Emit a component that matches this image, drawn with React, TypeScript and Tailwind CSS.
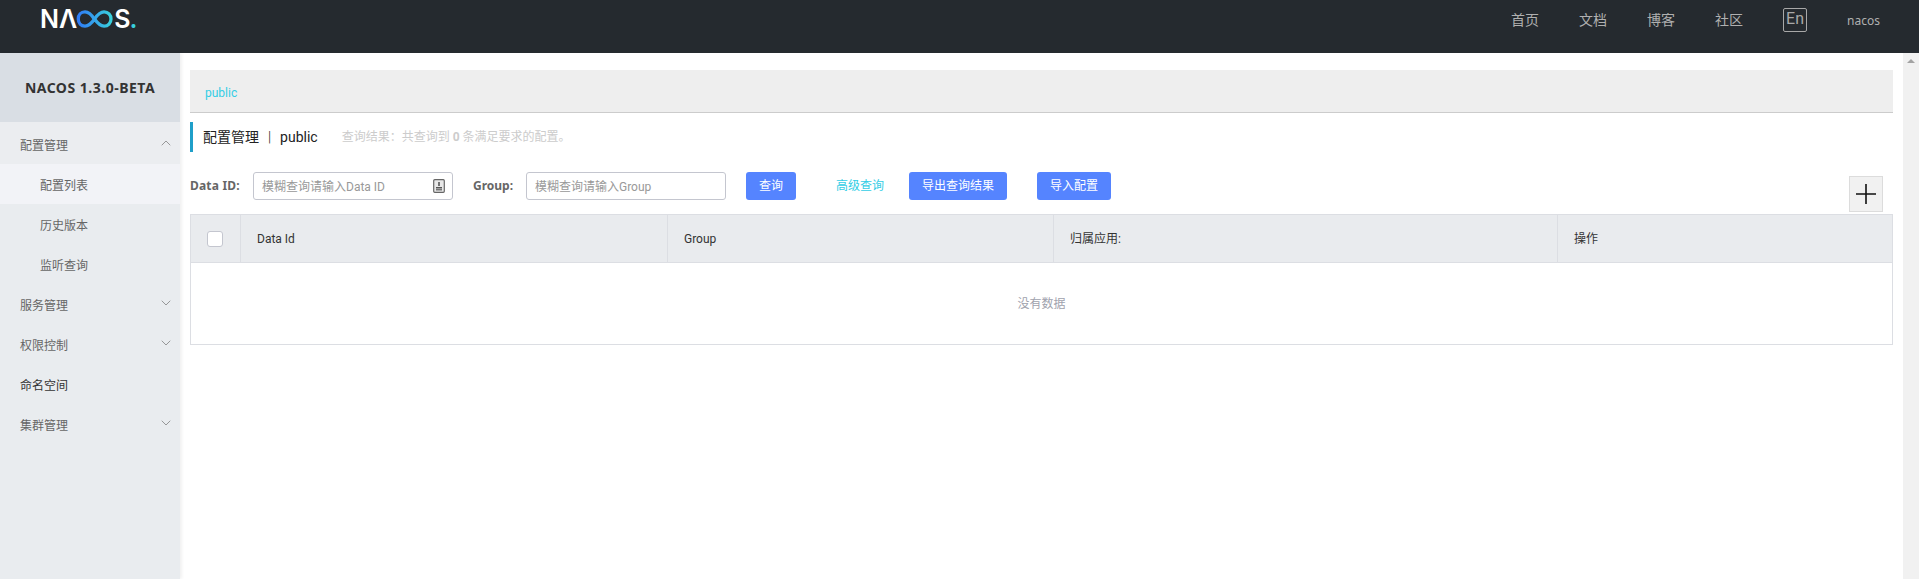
import React from "react";
import { ChevronDown, ChevronUp } from "lucide-react";

const font = "[font-family:'Roboto','Noto_Sans_CJK_SC',sans-serif]";
const boldFont = "[font-family:'Noto_Sans','Noto_Sans_CJK_SC',sans-serif]";

function Logo() {
  return (
    <div className="ml-10 mt-[7px] flex h-6 items-center text-white [font-family:'Inter',sans-serif] text-[25px] font-semibold leading-6">
      <span>NΛ</span>
      <svg width="40" height="20" viewBox="0 0 42 22" fill="none" className="-ml-[2px]">
        <defs>
          <linearGradient id="nacos-g" x1="0" x2="1" y1="0" y2="0">
            <stop offset="0" stopColor="#2f7cf6" />
            <stop offset="0.55" stopColor="#36a9ea" />
            <stop offset="1" stopColor="#38d0dc" />
          </linearGradient>
        </defs>
        <path
          d="M20 11C17 6 14 3.2 10 3.2C5.6 3.2 2.6 6.6 2.6 11C2.6 15.4 5.6 18.8 10 18.8C14 18.8 17 16 20.5 11C24 6 27 3.2 31 3.2C35.4 3.2 38.6 6.6 38.6 11C38.6 15.4 35.4 18.8 31 18.8C27 18.8 24 16 20.5 11"
          stroke="url(#nacos-g)"
          strokeWidth="3.6"
        />
      </svg>
      <span className="-ml-[1px]">S</span>
      <span className="-ml-[1px] text-[#38d0dc]">.</span>
    </div>
  );
}

function Header() {
  const links = ["首页", "文档", "博客", "社区"];
  return (
    <header className="flex h-[53px] items-start justify-between bg-[#252a2f]">
      <Logo />
      <div className="mr-[39px] flex items-center pt-2">
        {links.map((t) => (
          <span key={t} className="w-[68px] text-[14px] leading-5 text-[#b0b0b0]">
            {t}
          </span>
        ))}
        <span className="flex h-[24px] w-[24px] items-start justify-center rounded-[2px] border border-[#a8a8a8] text-[16px] leading-[20px] text-[#a8a8a8]">
          En
        </span>
        <span className={`ml-[40px] pt-[2px] text-[12px] leading-5 text-[#b0b0b0] ${boldFont}`}>nacos</span>
      </div>
    </header>
  );
}

function NavItem({ label, sub, open, arrow, dark }: { label: string; sub?: boolean; open?: boolean; arrow?: boolean; dark?: boolean }) {
  return (
    <div
      className={`flex h-10 items-center justify-between pt-1 text-[12px] ${sub ? "pl-10" : "pl-5"} pr-[6px] ${open ? "bg-[#f2f3f7]" : ""} ${dark ? "text-[#333]" : "text-[#666]"}`}
    >
      <span>{label}</span>
      {arrow === true && <ChevronDown size={16} strokeWidth={1.1} className="mb-[6px] text-[#777]" />}
    </div>
  );
}

function Sidebar() {
  return (
    <aside className="flex w-[180px] shrink-0 flex-col bg-[#e9ecef] shadow-[2px_0_3px_rgba(0,0,0,0.06)]">
      <div className={`flex h-[69px] items-center justify-center bg-[#d9dee4] text-[14px] font-bold tracking-[0.5px] text-[#333] ${boldFont}`}>
        NACOS 1.3.0-BETA
      </div>
      <div className="flex h-[42px] items-center justify-between bg-[#ebedf0] pl-5 pr-[6px] pt-[6px] text-[12px] text-[#666]">
        <span>配置管理</span>
        <ChevronUp size={16} strokeWidth={1.1} className="mb-[6px] text-[#777]" />
      </div>
      <NavItem label="配置列表" sub open />
      <NavItem label="历史版本" sub />
      <NavItem label="监听查询" sub />
      <NavItem label="服务管理" arrow />
      <NavItem label="权限控制" arrow />
      <NavItem label="命名空间" dark />
      <NavItem label="集群管理" arrow />
    </aside>
  );
}

function Field({ placeholder, icon }: { placeholder: string; icon?: boolean }) {
  return (
    <div className="flex h-7 w-[200px] items-center justify-between rounded-[3px] border border-[#c4c6cf] bg-white pl-2 pr-[7px] text-[12px] text-[#999]">
      <span className="pt-[1px]">{placeholder}</span>
      {icon === true && (
        <svg width="12" height="14" viewBox="0 0 12 14" fill="none">
          <rect x="0.7" y="0.7" width="10.6" height="12.6" rx="1" fill="#e8e8e8" stroke="#666" strokeWidth="1.2" />
          <path d="M6 3V7" stroke="#555" strokeWidth="1.6" />
          <rect x="3" y="8" width="6" height="1.5" fill="#555" />
          <rect x="3" y="10" width="6" height="1.5" fill="#777" />
        </svg>
      )}
    </div>
  );
}

function Btn({ children, w }: { children: React.ReactNode; w: string }) {
  return (
    <button className={`flex h-7 ${w} items-center justify-center rounded-[3px] bg-[#5584ff] text-[12px] text-white`}>
      {children}
    </button>
  );
}

function Th({ children, w, grow }: { children: React.ReactNode; w?: string; grow?: boolean }) {
  return (
    <div className={`flex h-full items-center border-r border-[#dcdee3] pl-4 text-[12px] text-[#333] ${w ?? ""} ${grow ? "flex-1 border-r-0" : ""}`}>
      {children}
    </div>
  );
}

function Main() {
  return (
    <main className="min-w-0 flex-1 pl-[10px] pr-[10px] pt-[17px]">
      <div className="flex h-[43px] items-center border-b border-[#ccc] bg-[#eee] pl-[15px] pt-[4px] text-[12px] text-[#33cde5]">
        public
      </div>
      <div className="mt-[9px] flex h-[30px] items-center border-l-[3px] border-[#1f9fc9] pl-[10px]">
        <span className="text-[14px] text-[#222]">配置管理</span>
        <span className="mx-[9px] text-[14px] font-light text-[#222]">|</span>
        <span className="text-[14px] text-[#222]">public</span>
        <span className="ml-[24px] text-[12px] text-[#ccc]">
          查询结果：共查询到 <b>0</b> 条满足要求的配置。
        </span>
      </div>
      <div className="relative mt-5 flex h-7 items-center">
        <span className={`w-[63px] text-[12px] font-bold tracking-[0.2px] text-[#666] ${boldFont}`}>Data ID:</span>
        <Field placeholder="模糊查询请输入Data ID" icon />
        <span className={`ml-5 w-[53px] text-[12px] font-bold text-[#666] ${boldFont}`}>Group:</span>
        <Field placeholder="模糊查询请输入Group" />
        <div className="ml-5">
          <Btn w="w-[50px]">查询</Btn>
        </div>
        <span className="ml-10 w-[73px] text-[12px] text-[#33cde5]">高级查询</span>
        <Btn w="w-[98px]">导出查询结果</Btn>
        <div className="ml-[30px]">
          <Btn w="w-[74px]">导入配置</Btn>
        </div>
        <div className="absolute right-[10px] top-[4px] flex h-[36px] w-[34px] items-center justify-center border border-[#dcdcdc] bg-[#f1f1f1]">
          <svg width="20" height="20" viewBox="0 0 20 20" fill="none">
            <path d="M0 10H20M10 0V20" stroke="#111" strokeWidth="1.6" />
          </svg>
        </div>
      </div>
      <div className="mt-[14px] border border-[#dcdee3]">
        <div className="flex h-[48px] items-center border-b border-[#dcdee3] bg-[#e9ebee]">
          <div className="flex h-full w-[50px] items-center justify-center border-r border-[#dcdee3] pr-[2px]">
            <span className="h-4 w-4 rounded-[3px] border border-[#c4c6cf] bg-white" />
          </div>
          <Th w="w-[427px]">Data Id</Th>
          <Th w="w-[386px]">Group</Th>
          <Th w="w-[504px]">归属应用:</Th>
          <Th grow>操作</Th>
        </div>
        <div className="flex h-[81px] items-center justify-center bg-white text-[12px] text-[#a0a2ad]">没有数据</div>
      </div>
    </main>
  );
}

export default function App() {
  return (
    <div className={`flex h-[579px] flex-col overflow-hidden bg-white ${font}`}>
      <Header />
      <div className="flex min-h-0 flex-1">
        <Sidebar />
        <Main />
        <div className="flex w-4 shrink-0 justify-center bg-[#f1f1f1] pt-[6px]">
          <span className="h-0 w-0 border-x-[4px] border-b-[4px] border-x-transparent border-b-[#a3a3a3]" />
        </div>
      </div>
    </div>
  );
}
